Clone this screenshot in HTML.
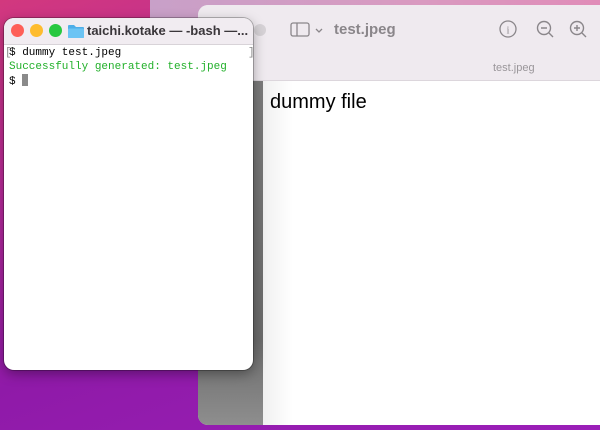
<!DOCTYPE html>
<html><head><style>
*{margin:0;padding:0;box-sizing:border-box}
body{width:600px;height:430px;overflow:hidden;position:relative;font-family:"Liberation Sans",sans-serif;
background:linear-gradient(160deg,#d2387e 0%,#b82a9a 30%,#8f1aa8 60%,#9b1fb8 100%);}
.bgtr{position:absolute;left:150px;top:0;width:450px;height:40px;background:linear-gradient(90deg,#c8a0c8,#d99ac0 60%,#e08cb8)}
.prev{position:absolute;left:198px;top:5px;width:420px;height:420px;border-radius:10px;overflow:hidden;background:#ece7ec}
.ptb{position:absolute;left:0;top:0;right:0;height:76px;background:#efeaef;border-bottom:1px solid #dcd6dc}
.side{position:absolute;left:0;top:76px;width:65px;bottom:0;background:linear-gradient(180deg,#7a7a7a,#6a6a6a 75%,#8e8e8e)}
.cont{position:absolute;left:65px;top:76px;right:0;bottom:0;background:linear-gradient(90deg,#f0f0f0,#fff 30px)}
.term{position:absolute;left:4px;top:18px;width:249px;height:352px;border-radius:10px;background:#fff;overflow:hidden;box-shadow:0 0 0 1px rgba(0,0,0,.25),0 4px 12px rgba(0,0,0,.35)}
.ttb{height:27px;background:#f1ecf1;border-bottom:1px solid #d8d3d8;position:relative}
.dot{position:absolute;top:6px;width:13px;height:13px;border-radius:50%}
.mono{font-family:"Liberation Mono",monospace;font-size:11px;line-height:13px;position:absolute;left:5px}
</style></head><body>
<div class="bgtr"></div>
<div class="prev">
 <div class="ptb">
  <div style="position:absolute;left:56px;top:19px;width:12px;height:12px;border-radius:50%;background:#d6d2d6"></div>
  <svg style="position:absolute;left:92px;top:17px" width="40" height="16"><rect x="1" y="1" width="18" height="13" rx="2" fill="none" stroke="#8a868a" stroke-width="1.3"/><line x1="7" y1="1" x2="7" y2="14" stroke="#8a868a" stroke-width="1.3"/><path d="M26 7l3 3 3-3" fill="none" stroke="#8a868a" stroke-width="1.3"/></svg>
  <div style="position:absolute;left:136px;top:16px;font-size:15px;font-weight:bold;color:#8a868a">test.jpeg</div>
  <svg style="position:absolute;left:300px;top:15px" width="100" height="20"><circle cx="10" cy="9" r="8" fill="none" stroke="#8a868a" stroke-width="1.3"/><text x="10" y="13.5" font-size="10" text-anchor="middle" fill="#8a868a" font-family="Liberation Serif">i</text>
  <circle cx="46" cy="8" r="6.5" fill="none" stroke="#8a868a" stroke-width="1.4"/><path d="M43 8h6M51 13l4 4" stroke="#8a868a" stroke-width="1.4"/>
  <circle cx="79" cy="8" r="6.5" fill="none" stroke="#8a868a" stroke-width="1.4"/><path d="M76 8h6M79 5v6M84 13l4 4" stroke="#8a868a" stroke-width="1.4"/></svg>
  <div style="position:absolute;left:295px;top:57px;font-size:11px;color:#9a969a">test.jpeg</div>
 </div>
 <div class="side"></div>
 <div class="cont"><div style="position:absolute;left:7px;top:10px;font-size:20px;color:#000">dummy file</div></div>
</div>
<div class="term">
 <div class="ttb">
  <div class="dot" style="left:7px;background:#fe5f57"></div>
  <div class="dot" style="left:26px;background:#febc2e"></div>
  <div class="dot" style="left:45px;background:#28c840"></div>
  <svg style="position:absolute;left:64px;top:6px" width="16" height="14"><path d="M0 2a1 1 0 0 1 1-1h5l2 2h7a1 1 0 0 1 1 1v9a1 1 0 0 1-1 1H1a1 1 0 0 1-1-1z" fill="#4eaee8"/><rect x="0" y="4.5" width="16" height="9.5" rx="1" fill="#6cc4f4"/></svg>
  <div style="position:absolute;left:83px;top:5px;font-size:13px;font-weight:bold;color:#3a363a;white-space:nowrap">taichi.kotake — -bash —...</div>
 </div>
 <div class="mono" style="top:29px;color:#000">$ dummy test.jpeg</div>
 <div class="mono" style="left:244px;top:29px;color:#888">]</div>
 <div class="mono" style="left:1px;top:29px;color:#888">[</div>
 <div class="mono" style="top:43px;color:#22b02a">Successfully generated: test.jpeg</div>
 <div class="mono" style="top:56px;color:#000">$ <span style="display:inline-block;width:6px;height:12px;background:#8a8a8a;vertical-align:-2px"></span></div>
</div>
</body></html>
